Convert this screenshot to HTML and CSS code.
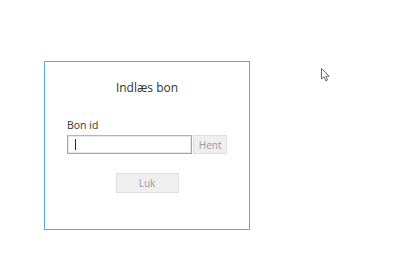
FILE: index.html
```html
<!DOCTYPE html>
<html>
<head>
<meta charset="utf-8">
<link rel="stylesheet" href="styles.css">
</head>
<body>
<div class="page">
  <div class="dialog">
    <div class="title">Indlæs bon</div>
    <div class="field">
      <div class="label">Bon id</div>
      <div class="row">
        <div class="input"><span class="caret"></span></div>
        <div class="btn hent">Hent</div>
      </div>
    </div>
    <div class="actions">
      <div class="btn luk">Luk</div>
    </div>
  </div>
  <svg class="pointer" width="11" height="15" viewBox="0 0 11 15">
    <path d="M0.5 0.5 L0.5 11 L3 8.8 L4.8 12.8 L6.5 12 L4.8 8.2 L8.2 8.2 Z" fill="#fff" stroke="#666" stroke-width="1"/>
  </svg>
</div>
</body>
</html>
```
FILE: styles.css
```css
html, body {
  margin: 0;
  padding: 0;
  background: #fff;
}
.page {
  position: relative;
  width: 400px;
  height: 255px;
  padding: 61px 0 0 44px;
  box-sizing: border-box;
  font-family: "Open Sans", "Noto Sans", sans-serif;
}
.dialog {
  width: 206px;
  height: 169px;
  box-sizing: border-box;
  border: 1px solid #5ba3e2;
  padding: 17px 22px 0 22px;
  display: flex;
  flex-direction: column;
}
.title {
  text-align: center;
  font-size: 12px;
  line-height: 18px;
  color: #333;
}
.field {
  margin-top: 20px;
}
.label {
  font-size: 10.5px;
  line-height: 16px;
  color: #333;
  margin-bottom: 2px;
}
.row {
  display: flex;
  gap: 1px;
}
.input {
  width: 126px;
  height: 19px;
  box-sizing: border-box;
  border: 1px solid #a6a6a6;
  border-top-color: #b4b4b4;
  box-shadow: inset 0 0 0 1px #e8e8e8;
  display: flex;
  align-items: center;
  padding-left: 7px;
}
.caret {
  width: 1px;
  height: 11px;
  background: #222;
}
.btn {
  box-sizing: border-box;
  background: #efefef;
  border: 1px solid #dedede;
  color: #9a9a9a;
  font-size: 10px;
  display: flex;
  align-items: center;
  justify-content: center;
}
.hent {
  width: 34px;
  height: 19px;
}
.actions {
  display: flex;
  justify-content: center;
  margin-top: 19px;
}
.luk {
  width: 63px;
  height: 20px;
}
.pointer {
  position: absolute;
  left: 321px;
  top: 68px;
}
```
